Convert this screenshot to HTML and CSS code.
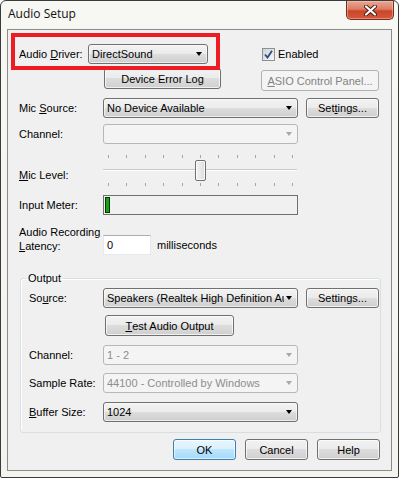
FILE: index.html
```html
<!DOCTYPE html>
<html lang="en">
<head>
  <meta charset="UTF-8" />
  <title>Audio Setup</title>
  <link rel="stylesheet" href="styles.css">
</head>
<body>

  <div class="window">
    <!-- Thanh tiêu đề -->
    <div class="titlebar">
      <span class="title">Audio Setup</span>
      <div class="close-btn">
        <svg width="13" height="11" viewBox="0 0 13 11">
          <path d="M2 1.5L11 9.5M11 1.5L2 9.5" stroke="#4b1a10" stroke-width="4" stroke-linecap="round" fill="none"/>
          <path d="M2 1.5L11 9.5M11 1.5L2 9.5" stroke="#fff" stroke-width="2.2" stroke-linecap="round" fill="none"/>
        </svg>
      </div>
    </div>

    <div class="client">
      <!-- Khung đỏ đánh dấu -->
      <div class="highlight"></div>

      <div class="row row-driver">
        <span class="lbl lbl-driver">Audio <u>D</u>river:</span>
        <div class="combo combo-driver"><span class="combo-text">DirectSound</span><span class="arrow"></span></div>
        <label class="check">
          <span class="box">
            <svg width="9" height="9" viewBox="0 0 9 9"><path d="M1 4.5L3.5 7.5L8 0.8" stroke="#2a4a82" stroke-width="1.8" fill="none"/></svg>
          </span>
          Enabled
        </label>
      </div>

      <div class="row row-top-buttons">
        <div class="btn btn-errlog">Device Error Log</div>
        <div class="btn btn-asio disabled"><u>A</u>SIO Control Panel...</div>
      </div>

      <div class="row row-mic">
        <span class="lbl">Mic <u>S</u>ource:</span>
        <div class="combo combo-wide"><span class="combo-text">No Device Available</span><span class="arrow"></span></div>
        <div class="btn btn-settings">Set<u>t</u>ings...</div>
      </div>

      <div class="row row-channel">
        <span class="lbl">Channel:</span>
        <div class="combo combo-wide disabled"><span class="combo-text"></span><span class="arrow"></span></div>
      </div>

      <div class="row row-level">
        <span class="lbl lbl-level"><u>M</u>ic Level:</span>
        <div class="slider">
          <div class="ticks"><i></i><i></i><i></i><i></i><i></i><i></i><i></i><i></i><i></i><i></i><i></i></div>
          <div class="track"></div>
          <div class="ticks ticks-bottom"><i></i><i></i><i></i><i></i><i></i><i></i><i></i><i></i><i></i><i></i><i></i></div>
          <div class="thumb"></div>
        </div>
      </div>

      <div class="row row-meter">
        <span class="lbl">Input Meter:</span>
        <div class="meter"><div class="meter-bar"></div></div>
      </div>

      <div class="row row-latency">
        <span class="lbl lbl-latency">Audio Recording<br><u>L</u>atency:</span>
        <div class="textbox">0</div>
        <span class="unit">milliseconds</span>
      </div>

      <!-- Nhóm Output -->
      <fieldset class="group">
        <legend>Output</legend>

        <div class="row">
          <span class="lbl lbl-group">So<u>u</u>rce:</span>
          <div class="combo combo-wide"><span class="combo-text">Speakers (Realtek High Definition Au</span><span class="arrow"></span></div>
          <div class="btn btn-settings">Settings...</div>
        </div>

        <div class="row row-test">
          <div class="btn btn-test"><u>T</u>est Audio Output</div>
        </div>

        <div class="row row-out-channel">
          <span class="lbl lbl-group">Channel:</span>
          <div class="combo combo-wide disabled"><span class="combo-text">1 - 2</span><span class="arrow"></span></div>
        </div>

        <div class="row row-rate">
          <span class="lbl lbl-group">Sample Rate:</span>
          <div class="combo combo-wide disabled"><span class="combo-text">44100 - Controlled by Windows</span><span class="arrow"></span></div>
        </div>

        <div class="row row-buffer">
          <span class="lbl lbl-group"><u>B</u>uffer Size:</span>
          <div class="combo combo-wide"><span class="combo-text">1024</span><span class="arrow"></span></div>
        </div>
      </fieldset>

      <div class="row row-dialog-buttons">
        <div class="btn btn-dialog btn-default">OK</div>
        <div class="btn btn-dialog">Cancel</div>
        <div class="btn btn-dialog">Help</div>
      </div>
    </div>
  </div>

</body>
</html>
```

FILE: styles.css
```css
body, html {
  margin: 0; padding: 0;
  background: #ffffff;
  font-family: "Liberation Sans", Arial, sans-serif;
  font-size: 11px;
  color: #000;
}

u { text-decoration: underline; text-underline-offset: 1px; }

/* Khung cửa sổ */
.window {
  width: 399px;
  height: 478px;
  box-sizing: border-box;
  border: 1px solid #3b3b3b;
  border-radius: 6px 6px 2px 2px;
  background: linear-gradient(#f7f7f3, #f4f4ee);
  display: flex;
  flex-direction: column;
  overflow: hidden;
}

.titlebar {
  height: 28px;
  display: flex;
  align-items: flex-start;
  padding-left: 7px;
  flex-shrink: 0;
}
.title {
  font-family: "Open Sans", "Noto Sans", sans-serif;
  font-size: 12px;
  line-height: 16px;
  margin-top: 5px;
  color: #111;
}
.close-btn {
  margin-left: auto;
  margin-right: 4px;
  width: 48px;
  height: 19px;
  box-sizing: border-box;
  border: 1px solid #7a2a1a;
  border-top: none;
  border-radius: 0 0 5px 5px;
  background: linear-gradient(#e9a797 0%, #dd7d65 45%, #c9462a 55%, #d3593c 100%);
  box-shadow: inset 0 0 0 1px rgba(255, 210, 190, 0.45);
  display: flex;
  align-items: center;
  justify-content: center;
}

.client {
  flex: 1;
  margin: 0 6px 6px 6px;
  border: 1px solid #8b8c8c;
  background: #f0f0f0;
  position: relative;
  padding: 14px 11px 0 11px;
  box-sizing: border-box;
}

/* Khung đỏ */
.highlight {
  position: absolute;
  left: 3px;
  top: 3px;
  width: 209px;
  height: 37px;
  box-sizing: border-box;
  border: 4px solid #ed1c24;
  pointer-events: none;
  z-index: 5;
}

.row {
  display: flex;
  align-items: center;
}

.lbl {
  width: 84px;
  flex-shrink: 0;
  white-space: nowrap;
  line-height: 14px;
}
.lbl-driver { width: 69px; }
.lbl-group { width: 74px; }

/* Combobox */
.combo {
  height: 20px;
  box-sizing: border-box;
  border: 1px solid #707070;
  border-radius: 3px;
  background: linear-gradient(#f3f3f3 0%, #ebebeb 50%, #dddddd 50%, #cfcfcf 100%);
  box-shadow: inset 0 0 0 1px rgba(255, 255, 255, 0.6);
  display: flex;
  align-items: center;
  padding: 0 5px 0 3px;
}
.combo-text {
  flex: 1;
  overflow: hidden;
  white-space: nowrap;
  margin-right: 2px;
}
.arrow {
  width: 0;
  height: 0;
  border-left: 3.5px solid transparent;
  border-right: 3.5px solid transparent;
  border-top: 4px solid #000;
  flex-shrink: 0;
}
.combo-driver { width: 120px; }
.combo-wide { width: 195px; }

.combo.disabled {
  border-color: #b4b8bb;
  background: #f4f4f4;
  box-shadow: none;
  color: #8d8d8d;
}
.combo.disabled .arrow { border-top-color: #a8a8a8; }

/* Nút bấm */
.btn {
  height: 21px;
  box-sizing: border-box;
  border: 1px solid #707070;
  border-radius: 3px;
  background: linear-gradient(#f2f2f2 0%, #ebebeb 50%, #dddddd 50%, #cfcfcf 100%);
  box-shadow: inset 0 0 0 1px rgba(255, 255, 255, 0.7);
  display: flex;
  align-items: center;
  justify-content: center;
  white-space: nowrap;
  flex-shrink: 0;
}
.btn.disabled {
  border-color: #adb2b5;
  background: #f4f4f4;
  box-shadow: none;
  color: #838383;
}
.btn-errlog { width: 117px; margin-left: 85px; }
.btn-asio { width: 118px; margin-left: 40px; margin-top: 2px; }
.btn-settings { width: 73px; margin-left: 8px; height: 20px; }
.btn-test { width: 129px; margin-left: 76px; }
.btn-dialog { width: 63px; }
.btn-default {
  border-color: #3c7fb1;
  background: linear-gradient(#eaf6fd 0%, #d9f0fc 50%, #bee6fd 50%, #a7d9f5 100%);
  box-shadow: inset 0 0 0 1px rgba(255, 255, 255, 0.6);
}

/* Checkbox */
.check {
  display: flex;
  align-items: center;
  margin-left: 54px;
  gap: 3px;
}
.box {
  width: 13px;
  height: 13px;
  box-sizing: border-box;
  border: 1px solid #8e8f8f;
  background: linear-gradient(135deg, #cdd3da, #f6f7f8);
  display: flex;
  align-items: center;
  justify-content: center;
}

/* Khoảng cách giữa các hàng */
.row-driver { height: 20px; }
.row-top-buttons { margin-top: 4px; align-items: flex-start; }
.row-mic { margin-top: 7px; }
.row-channel { margin-top: 6px; }
.row-level { margin-top: 11px; align-items: flex-start; }
.lbl-level { padding-top: 13px; }
.row-meter { margin-top: 8px; }
.row-latency { margin-top: 10px; align-items: flex-start; }
.row-test { margin-top: 7px; }
.row-out-channel { margin-top: 9px; }
.row-rate { margin-top: 8px; }
.row-buffer { margin-top: 9px; }
.row-dialog-buttons {
  margin-top: 6px;
  justify-content: flex-end;
  gap: 9px;
}

/* Thanh trượt */
.slider {
  position: relative;
  width: 195px;
  height: 32px;
}
.ticks {
  display: flex;
  justify-content: space-between;
  padding: 0 5px;
  height: 3px;
}
.ticks i {
  width: 1px;
  height: 3px;
  background: #a5a5a5;
}
.ticks-bottom { margin-top: 12px; }
.track {
  margin-top: 11px;
  height: 1px;
  background: #c9c9c9;
  border-bottom: 1px solid #ffffff;
  margin-right: 1px;
}
.thumb {
  position: absolute;
  left: 92px;
  top: 5px;
  width: 11px;
  height: 21px;
  box-sizing: border-box;
  border: 1px solid #707070;
  border-radius: 2px;
  background: linear-gradient(90deg, #f4f4f4, #dcdcdc);
  box-shadow: inset 0 0 0 1px rgba(255, 255, 255, 0.8);
}

/* Đồng hồ đo */
.meter {
  width: 195px;
  height: 20px;
  box-sizing: border-box;
  border: 1px solid #6f6f6f;
  background: #f0f0f0;
  padding: 1px;
}
.meter-bar {
  width: 5px;
  height: 16px;
  box-sizing: border-box;
  border: 1px solid #0b300b;
  background: #13a313;
}

.lbl-latency { line-height: 14px; }
.textbox {
  width: 48px;
  height: 20px;
  box-sizing: border-box;
  margin-top: 10px;
  border: 1px solid #e3e9ef;
  border-top-color: #abadb3;
  background: #fff;
  padding: 0 3px;
  display: flex;
  align-items: center;
}
.unit {
  margin-left: 6px;
  margin-top: 10px;
  line-height: 20px;
}

/* Nhóm Output */
.group {
  margin: 16px 0 0 1px;
  width: 361px;
  box-sizing: border-box;
  border: 1px solid #d5dfe5;
  border-radius: 3px;
  box-shadow: inset 1px 1px 0 #ffffff;
  padding: 3px 0 10px 8px;
  min-width: 0;
}
.group legend {
  padding: 0 2px;
  margin-left: -3px;
  line-height: 14px;
}
```
